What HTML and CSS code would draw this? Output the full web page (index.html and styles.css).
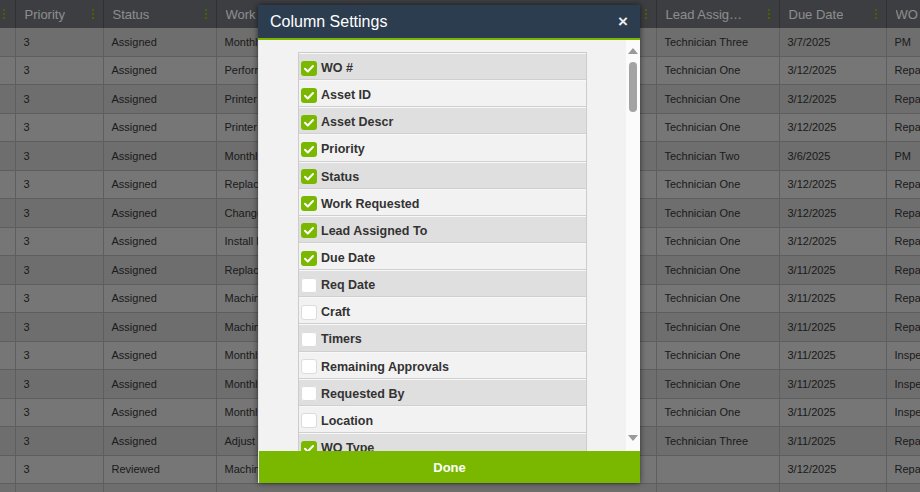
FILE: index.html
```html
<!DOCTYPE html>
<html lang="en">

<head>
  <meta charset="UTF-8">
  <title>Work Orders</title>
  <link rel="stylesheet" href="styles.css">
</head>

<body>
  <table class="grid">
    <colgroup>
      <col class="c-first">
      <col class="c-priority">
      <col class="c-status">
      <col class="c-work">
      <col class="c-lead">
      <col class="c-due">
      <col class="c-type">
    </colgroup>
    <thead>
      <tr>
        <th class="first"><span class="dots"><i></i><i></i><i></i></span></th>
        <th><div class="th-in"><span class="th-label">Priority</span><span class="dots"><i></i><i></i><i></i></span></div></th>
        <th><div class="th-in"><span class="th-label">Status</span><span class="dots"><i></i><i></i><i></i></span></div></th>
        <th><div class="th-in"><span class="th-label">Work Requested</span><span class="dots"><i></i><i></i><i></i></span></div></th>
        <th><div class="th-in"><span class="th-label">Lead Assigned To</span><span class="dots"><i></i><i></i><i></i></span></div></th>
        <th><div class="th-in"><span class="th-label">Due Date</span><span class="dots"><i></i><i></i><i></i></span></div></th>
        <th><div class="th-in"><span class="th-label">WO Type</span><span class="dots"><i></i><i></i><i></i></span></div></th>
      </tr>
    </thead>
    <tbody>
      <tr><td></td><td>3</td><td>Assigned</td><td>Monthly PM - Compressor Check</td><td>Technician Three</td><td>3/7/2025</td><td>PM</td></tr>
      <tr><td></td><td>3</td><td>Assigned</td><td>Perform Belt Inspection</td><td>Technician One</td><td>3/12/2025</td><td>Repair</td></tr>
      <tr><td></td><td>3</td><td>Assigned</td><td>Printer Jam - Office 2</td><td>Technician One</td><td>3/12/2025</td><td>Repair</td></tr>
      <tr><td></td><td>3</td><td>Assigned</td><td>Printer Toner Replacement</td><td>Technician One</td><td>3/12/2025</td><td>Repair</td></tr>
      <tr><td></td><td>3</td><td>Assigned</td><td>Monthly PM - Boiler</td><td>Technician Two</td><td>3/6/2025</td><td>PM</td></tr>
      <tr><td></td><td>3</td><td>Assigned</td><td>Replace Light Fixture</td><td>Technician One</td><td>3/12/2025</td><td>Repair</td></tr>
      <tr><td></td><td>3</td><td>Assigned</td><td>Change Air Filter</td><td>Technician One</td><td>3/12/2025</td><td>Repair</td></tr>
      <tr><td></td><td>3</td><td>Assigned</td><td>Install New Door Closer</td><td>Technician One</td><td>3/12/2025</td><td>Repair</td></tr>
      <tr><td></td><td>3</td><td>Assigned</td><td>Replace Faucet Cartridge</td><td>Technician One</td><td>3/11/2025</td><td>Repair</td></tr>
      <tr><td></td><td>3</td><td>Assigned</td><td>Machine 4 Hydraulic Leak</td><td>Technician One</td><td>3/11/2025</td><td>Repair</td></tr>
      <tr><td></td><td>3</td><td>Assigned</td><td>Machine 2 Noise</td><td>Technician One</td><td>3/11/2025</td><td>Repair</td></tr>
      <tr><td></td><td>3</td><td>Assigned</td><td>Monthly Fire Extinguisher Check</td><td>Technician One</td><td>3/11/2025</td><td>Inspection</td></tr>
      <tr><td></td><td>3</td><td>Assigned</td><td>Monthly Eyewash Check</td><td>Technician One</td><td>3/11/2025</td><td>Inspection</td></tr>
      <tr><td></td><td>3</td><td>Assigned</td><td>Monthly Emergency Light Test</td><td>Technician One</td><td>3/11/2025</td><td>Inspection</td></tr>
      <tr><td></td><td>3</td><td>Assigned</td><td>Adjust Conveyor Tension</td><td>Technician Three</td><td>3/11/2025</td><td>Repair</td></tr>
      <tr><td></td><td>3</td><td>Reviewed</td><td>Machine 1 Guard Repair</td><td></td><td>3/12/2025</td><td>Repair</td></tr>
      <tr><td></td><td>3</td><td>Assigned</td><td>Monthly PM - Chiller</td><td>Technician Two</td><td>3/12/2025</td><td>PM</td></tr>
    </tbody>
  </table>

  <div class="backdrop"></div>

  <div class="modal">
    <div class="modal-header">
      <span class="modal-title">Column Settings</span>
      <span class="modal-close">&times;</span>
    </div>
    <div class="modal-body">
      <div class="modal-scroll">
        <ul class="col-list">
          <li class="on"><span class="check"></span>WO #</li>
          <li class="on"><span class="check"></span>Asset ID</li>
          <li class="on"><span class="check"></span>Asset Descr</li>
          <li class="on"><span class="check"></span>Priority</li>
          <li class="on"><span class="check"></span>Status</li>
          <li class="on"><span class="check"></span>Work Requested</li>
          <li class="on"><span class="check"></span>Lead Assigned To</li>
          <li class="on"><span class="check"></span>Due Date</li>
          <li><span class="check"></span>Req Date</li>
          <li><span class="check"></span>Craft</li>
          <li><span class="check"></span>Timers</li>
          <li><span class="check"></span>Remaining Approvals</li>
          <li><span class="check"></span>Requested By</li>
          <li><span class="check"></span>Location</li>
          <li class="on"><span class="check"></span>WO Type</li>
          <li><span class="check"></span>Asset Group</li>
        </ul>
      </div>
      <div class="scrollbar">
        <span class="arrow-up"></span>
        <span class="thumb"></span>
        <span class="arrow-down"></span>
      </div>
    </div>
    <button class="done-btn">Done</button>
  </div>
</body>

</html>
```

FILE: styles.css
```css
body,
html {
  margin: 0;
  padding: 0;
  width: 100%;
  height: 100%;
  overflow: hidden;
  background-color: #d6d6d6;
  font-family: "Liberation Sans", Arial, sans-serif;
}

/* grid */
.grid {
  border-collapse: collapse;
  table-layout: fixed;
  width: 1026px;
}

.c-first { width: 15px; }
.c-priority { width: 88px; }
.c-status { width: 113px; }
.c-work { width: 440px; }
.c-lead { width: 123px; }
.c-due { width: 107px; }
.c-type { width: 140px; }

.grid th {
  height: 28px;
  padding: 0 9px 0 9px;
  background-color: #6d7278;
  border-right: 1px solid #565a5e;
  color: #fff;
  font-size: 13px;
  font-weight: normal;
  text-align: left;
}

.grid th.first {
  padding: 0 0 0 3px;
}

.th-in {
  display: flex;
  align-items: center;
  justify-content: space-between;
}

.th-label {
  overflow: hidden;
  white-space: nowrap;
  text-overflow: ellipsis;
}

.dots {
  display: flex;
  flex-direction: column;
  gap: 2px;
  flex-shrink: 0;
  margin-left: 22px;
}

.first .dots {
  margin-left: 0;
}

.dots i {
  display: block;
  width: 2px;
  height: 2px;
  background-color: #7ab800;
}

.grid td {
  height: 27.5px;
  padding: 0 8px;
  border-right: 1px solid #ababab;
  border-bottom: 1px solid #ababab;
  color: #333;
  font-size: 11px;
  white-space: nowrap;
  overflow: hidden;
}

.grid tbody tr:nth-child(odd) td {
  background-color: #c9c9c9;
}

.grid tbody tr:nth-child(even) td {
  background-color: #d7d7d7;
}

.backdrop {
  position: fixed;
  inset: 0;
  background-color: rgba(0, 0, 0, 0.45);
}

/* modal */
.modal {
  position: absolute;
  left: 258px;
  top: 5px;
  width: 382px;
  height: 478px;
  display: flex;
  flex-direction: column;
  background-color: #f2f2f2;
  box-shadow: 0 0 6px rgba(0, 0, 0, 0.6);
}

.modal-header {
  height: 33px;
  flex-shrink: 0;
  display: flex;
  align-items: center;
  justify-content: space-between;
  padding: 0 12px 0 12px;
  background-color: #2c3d4f;
  border-bottom: 2px solid #7ab800;
  color: #fff;
}

.modal-title {
  font-size: 16px;
}

.modal-close {
  font-size: 17px;
  font-weight: bold;
  color: #ececec;
}

.modal-body {
  flex: 1;
  display: flex;
  min-height: 0;
  border-left: 1px solid #e4e4e4;
}

.modal-scroll {
  flex: 1;
  overflow: hidden;
  padding: 12px 39px 0 39px;
}

.col-list {
  list-style: none;
  margin: 0;
  padding: 0;
  border: 1px solid #cccccc;
  border-bottom: none;
}

.col-list li {
  display: flex;
  align-items: center;
  border-bottom: 1px solid #cfcfcf;
  border-top: 1px solid #f8f8f8;
  box-sizing: border-box;
  height: 27.15px;
  padding: 3px 0 0 2px;
  color: #333;
  font-size: 12.5px;
  font-weight: bold;
}

.col-list li:nth-child(odd) {
  background-color: #dfdfdf;
}

.col-list li:nth-child(even) {
  background-color: #f2f2f2;
}

.check {
  width: 16px;
  height: 15px;
  margin-right: 4px;
  border-radius: 3px;
  background-color: #fff;
  box-shadow: inset 0 0 0 1px #dcdcdc;
  flex-shrink: 0;
}

.col-list li.on .check {
  background-color: #7ab800;
  box-shadow: none;
  background-image: url("data:image/svg+xml,%3Csvg xmlns='http://www.w3.org/2000/svg' viewBox='0 0 16 15'%3E%3Cpolyline points='4,7.8 6.8,10.5 12,5' fill='none' stroke='white' stroke-width='2' stroke-linecap='round' stroke-linejoin='round'/%3E%3C/svg%3E");
}

.scrollbar {
  width: 14px;
  flex-shrink: 0;
  position: relative;
  background-color: #fbfbfb;
}

.arrow-up,
.arrow-down {
  position: absolute;
  left: 2px;
  width: 0;
  height: 0;
  border-left: 5px solid transparent;
  border-right: 5px solid transparent;
}

.arrow-up {
  top: 8px;
  border-bottom: 6px solid #9a9a9a;
}

.arrow-down {
  bottom: 10px;
  border-top: 6px solid #9a9a9a;
}

.thumb {
  position: absolute;
  left: 3px;
  top: 22px;
  width: 8px;
  height: 50px;
  border-radius: 4px;
  background-color: #a3a3a3;
}

.done-btn {
  height: 32px;
  flex-shrink: 0;
  border: none;
  border-left: 1px solid #e4e4e4;
  background-color: #7ab800;
  color: #fff;
  font-family: "Liberation Sans", Arial, sans-serif;
  font-size: 13px;
  font-weight: bold;
  cursor: pointer;
}
```
